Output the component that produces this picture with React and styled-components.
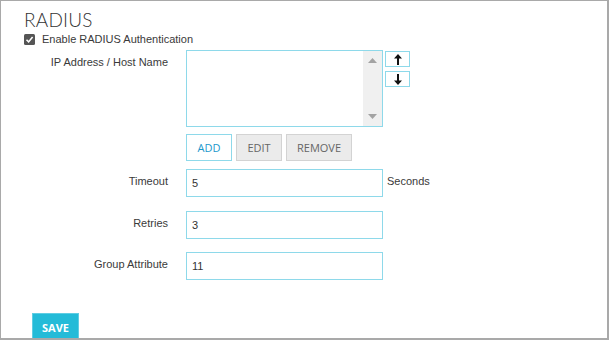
import React from 'react'
import styled, { createGlobalStyle } from 'styled-components'

const GlobalStyle = createGlobalStyle`
  html, body {
    margin: 0;
    padding: 0;
    background: #fff;
  }
  body {
    font-family: "Liberation Sans", Arial, sans-serif;
  }
`;

const Frame = styled.div`
  width: 609px;
  height: 340px;
  box-sizing: border-box;
  border: 1px solid #a9a9a9;
  border-right-width: 2px;
  border-bottom-width: 2px;
  overflow: hidden;
  padding: 8px 0 0 22px;
`;

const Title = styled.h2`
  margin: 0 0 0 1px;
  font-family: Lato, "Open Sans", sans-serif;
  font-weight: 300;
  font-size: 19px;
  line-height: 22px;
  color: #333;
  letter-spacing: 0.2px;
`;

const CheckRow = styled.label`
  display: flex;
  align-items: center;
  gap: 7px;
  margin: 1px 0 0 1px;
  font-size: 11px;
  color: #3a3a3a;
  line-height: 14px;
`;

const Form = styled.div`
  display: grid;
  grid-template-columns: 145px auto;
  column-gap: 18px;
  align-items: start;
`;

const Label = styled.div`
  grid-column: 1;
  text-align: right;
  font-size: 11px;
  line-height: 14px;
  color: #3a3a3a;
  padding-top: 5px;
  margin-top: ${p => p.$gap || 0}px;
`;

const Cell = styled.div`
  grid-column: 2;
  display: flex;
  align-items: ${p => p.$align || 'center'};
  gap: ${p => p.$spacing || 0}px;
  margin-top: ${p => p.$gap || 0}px;
`;

const ListBox = styled.div`
  width: 197px;
  height: 77px;
  box-sizing: border-box;
  border: 1px solid #8ed9ea;
  display: flex;
  justify-content: flex-end;
`;

const ScrollTrack = styled.div`
  width: 19px;
  background: #f0f0f0;
  display: flex;
  flex-direction: column;
  justify-content: space-between;
  align-items: center;
  padding: 7px 0;
`;

const MoveStack = styled.div`
  display: flex;
  flex-direction: column;
  gap: 4px;
  margin-top: 1px;
`;

const MoveButton = styled.button`
  width: 25px;
  height: 16px;
  box-sizing: border-box;
  border: 1px solid #8ed9ea;
  background: #fff;
  padding: 0;
  display: flex;
  align-items: center;
  justify-content: center;
`;

const ActionButton = styled.button`
  height: 27px;
  box-sizing: border-box;
  width: ${p => p.$w}px;
  padding: 0;
  font-family: "Open Sans", sans-serif;
  font-size: 11px;
  border: 1px solid ${p => (p.$primary ? '#8ed9ea' : '#d3d3d3')};
  background: ${p => (p.$primary ? '#fff' : '#ebebeb')};
  color: ${p => (p.$primary ? '#1c98cc' : '#666')};
`;

const Input = styled.input`
  width: 197px;
  height: 28px;
  box-sizing: border-box;
  border: 1px solid #8ed9ea;
  padding: 0 5px;
  font-family: "Liberation Sans", Arial, sans-serif;
  font-size: 11px;
  color: #333;
  outline: none;
`;

const Unit = styled.span`
  font-size: 11px;
  color: #3a3a3a;
  align-self: flex-start;
  padding-top: 5px;
  line-height: 14px;
`;

const SaveButton = styled.button`
  margin: 33px 0 0 9px;
  width: 47px;
  height: 28px;
  border: 1px solid #5fcde3;
  background: #24bbd8;
  color: #fff;
  font-family: "Open Sans", sans-serif;
  font-weight: 700;
  font-size: 11px;
  padding: 0;
  display: block;
`;

const CheckIcon = () => (
  <svg width="11" height="11" viewBox="0 0 11 11">
    <rect x="0" y="0" width="11" height="11" rx="1.5" fill="#555" />
    <path d="M2.5 5.8 L4.6 7.9 L8.6 3" stroke="#fff" strokeWidth="1.6" fill="none" />
  </svg>
);

const Arrow = ({ down }) => (
  <svg width="8" height="11" viewBox="0 0 8 11" style={down ? { transform: 'rotate(180deg)' } : undefined}>
    <path d="M4 0 L8 4.5 H5 V11 H3 V4.5 H0 Z" fill="#111" />
  </svg>
);

const Tri = ({ down }) => (
  <svg width="9" height="5" viewBox="0 0 9 5">
    <path d={down ? 'M0 0 H9 L4.5 5 Z' : 'M0 5 H9 L4.5 0 Z'} fill="#a3a3a3" />
  </svg>
);

const App = () => {
  return (
    <>
      <GlobalStyle />
      <Frame>
        <Title>RADIUS</Title>
        <CheckRow>
          <CheckIcon />
          Enable RADIUS Authentication
        </CheckRow>
        <Form>
          <Label $gap={4}>IP Address / Host Name</Label>
          <Cell $align="flex-start" $spacing={2} $gap={4}>
            <ListBox>
              <ScrollTrack>
                <Tri />
                <Tri down />
              </ScrollTrack>
            </ListBox>
            <MoveStack>
              <MoveButton><Arrow /></MoveButton>
              <MoveButton><Arrow down /></MoveButton>
            </MoveStack>
          </Cell>

          <Cell $spacing={4} $gap={7}>
            <ActionButton $primary $w={46}>ADD</ActionButton>
            <ActionButton $w={46}>EDIT</ActionButton>
            <ActionButton $w={66}>REMOVE</ActionButton>
          </Cell>

          <Label $gap={8}>Timeout</Label>
          <Cell $spacing={4} $gap={8}>
            <Input defaultValue="5" />
            <Unit>Seconds</Unit>
          </Cell>

          <Label $gap={14}>Retries</Label>
          <Cell $gap={14}>
            <Input defaultValue="3" />
          </Cell>

          <Label $gap={13}>Group Attribute</Label>
          <Cell $gap={13}>
            <Input defaultValue="11" />
          </Cell>
        </Form>
        <SaveButton>SAVE</SaveButton>
      </Frame>
    </>
  )
}

export default App;
